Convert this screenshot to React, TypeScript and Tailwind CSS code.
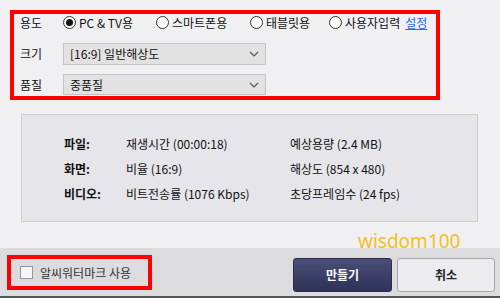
import React from "react";

const font = { fontFamily: '"Noto Sans CJK KR", "Noto Sans", sans-serif' };

function Radio({ checked, label }: { checked?: boolean; label: string }) {
  return (
    <div className="flex items-center gap-[3px]">
      <span className="w-[13px] h-[13px] rounded-full border border-[#333] bg-white flex items-center justify-center">
        {checked && <span className="w-[7px] h-[7px] rounded-full bg-[#111]" />}
      </span>
      <span className="text-[12px] text-[#111] leading-none">{label}</span>
    </div>
  );
}

function Select({ value, h }: { value: string; h: string }) {
  return (
    <div className={`w-[203px] ${h} border border-[#c4c4c4] bg-[#e2e2e2] flex items-center justify-between pl-[6px] pr-[6px]`}>
      <span className="text-[12px] text-[#111] leading-none">{value}</span>
      <svg width="10" height="6" viewBox="0 0 10 6">
        <path d="M1 1 L5 5 L9 1" fill="none" stroke="#555" strokeWidth="1.2" />
      </svg>
    </div>
  );
}

function InfoRow({ label, a, b }: { label: string; a: string; b: string }) {
  return (
    <div className="flex items-center h-[25px] text-[12px] text-[#111]">
      <span className="w-[62px] font-bold">{label}</span>
      <span className="w-[164px]">{a}</span>
      <span>{b}</span>
    </div>
  );
}

export default function App() {
  return (
    <div style={font} className="relative w-[500px] h-[298px] bg-[#f0f0f2] flex flex-col overflow-hidden">
      <div className="pt-[10px] pl-[10px]">
        <div className="w-[430px] h-[90px] border-[4px] border-[#ff0000] flex flex-col pl-[6px]">
          <div className="flex items-center h-[17px] mt-0">
            <span className="w-[43px] text-[12px] text-[#111]">용도</span>
            <div className="w-[93px]"><Radio checked label="PC & TV용" /></div>
            <div className="w-[94px]"><Radio label="스마트폰용" /></div>
            <div className="w-[79px]"><Radio label="태블릿용" /></div>
            <div className="flex items-center gap-[5px]">
              <Radio label="사용자입력" />
              <span className="text-[12px] text-[#2a6fe8] underline leading-none">설정</span>
            </div>
          </div>
          <div className="flex items-center mt-[12px]">
            <span className="w-[43px] text-[12px] text-[#111]">크기</span>
            <Select value="[16:9] 일반해상도" h="h-[22px]" />
          </div>
          <div className="flex items-center mt-[9px]">
            <span className="w-[43px] text-[12px] text-[#111]">품질</span>
            <Select value="중품질" h="h-[21px]" />
          </div>
        </div>
      </div>

      <div className="ml-[21px] mt-[14px] w-[457px] h-[108px] border border-[#cdcdd2] bg-[#e6e5ea] pl-[42px] pt-[16px]">
        <InfoRow label="파일:" a="재생시간 (00:00:18)" b="예상용량 (2.4 MB)" />
        <InfoRow label="화면:" a="비율 (16:9)" b="해상도 (854 x 480)" />
        <InfoRow label="비디오:" a="비트전송률 (1076 Kbps)" b="초당프레임수 (24 fps)" />
      </div>

      <div className="mt-auto h-[48px] bg-[#dcdcde] flex items-start pt-[7px] pl-[7px] pr-[5px]">
        <div className="w-[145px] h-[35px] border-[4px] border-[#ff0000] flex items-center pl-[9px] gap-[7px]">
          <span className="w-[13px] h-[13px] border border-[#999] bg-[#f7f7f7]" />
          <span className="text-[12px] text-[#333]">알씨워터마크 사용</span>
        </div>
        <div className="ml-auto flex gap-[5px] mt-[3px]">
          <div className="w-[99px] h-[34px] rounded-[3px] bg-gradient-to-b from-[#4b4f78] to-[#2e3256] border border-[#2a2d4a] flex items-center justify-center text-white text-[12px] font-bold">
            만들기
          </div>
          <div className="w-[98px] h-[34px] rounded-[3px] bg-[#ececee] border border-[#a8a8ac] flex items-center justify-center text-[#222] text-[12px] font-bold">
            취소
          </div>
        </div>
      </div>
      <div className="h-[2px] bg-[#555]" />

      <div
        className="absolute left-[358px] top-[232px] text-[19px] leading-none text-[#f2c022]"
        style={{ fontFamily: '"Noto Sans", sans-serif' }}
      >
        wisdom100
      </div>
    </div>
  );
}
